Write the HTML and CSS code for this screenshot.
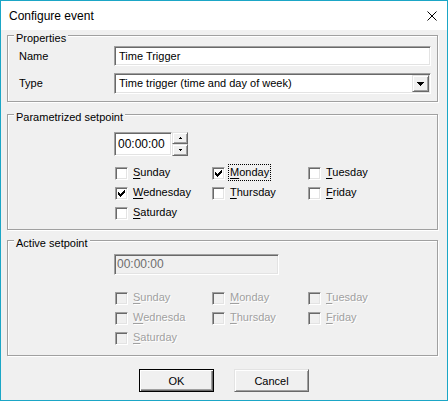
FILE: index.html
```html
<!DOCTYPE html>
<html>
<head>
<meta charset="utf-8">
<link rel="stylesheet" href="styles.css">
</head>
<body>
<div class="window">
  <div class="titlebar">
    <span class="title">Configure event</span>
    <span class="close"><svg width="10" height="10" viewBox="0 0 10 10"><path d="M0.5 0.5L9.5 9.5M9.5 0.5L0.5 9.5" stroke="#000" stroke-width="1" fill="none"/></svg></span>
  </div>
  <div class="client">
    <div class="group g-props">
      <div class="legend">Properties</div>
      <div class="form">
        <span class="flabel">Name</span>
        <div class="edit name-edit">Time Trigger</div>
        <span class="flabel">Type</span>
        <div class="combo">
          <span class="combo-text">Time trigger (time and day of week)</span>
          <span class="drop raised"><svg width="7" height="4" viewBox="0 0 7 4" shape-rendering="crispEdges"><path d="M0 0h7v1H0z M1 1h5v1H1z M2 2h3v1H2z M3 3h1v1H3z" fill="#000"/></svg></span>
        </div>
      </div>
    </div>

    <div class="group g-param">
      <div class="legend">Parametrized setpoint</div>
      <div class="time-row">
        <div class="edit time-edit">00:00:00</div>
        <div class="spin">
          <span class="spin-btn raised"><svg width="3" height="2" viewBox="0 0 3 2" shape-rendering="crispEdges"><path d="M1 0h1v1H1z M0 1h3v1H0z" fill="#000"/></svg></span>
          <span class="spin-btn raised"><svg width="3" height="2" viewBox="0 0 3 2" shape-rendering="crispEdges"><path d="M0 0h3v1H0z M1 1h1v1H1z" fill="#000"/></svg></span>
        </div>
      </div>
      <div class="days">
        <div class="day"><span class="cb"></span><span class="dlabel"><u>S</u>unday</span></div>
        <div class="day"><span class="cb"><svg class="check" width="7" height="7" viewBox="0 0 7 7" shape-rendering="crispEdges"><path d="M6 0h1v1H6z M5 1h2v1H5z M0 2h1v1H0z M4 2h3v1H4z M0 3h2v1H0z M3 3h3v1H3z M0 4h5v1H0z M1 5h3v1H1z M2 6h1v1H2z" fill="#000"/></svg></span><span class="dlabel focus"><u>M</u>onday</span></div>
        <div class="day"><span class="cb"></span><span class="dlabel"><u>T</u>uesday</span></div>
        <div class="day"><span class="cb"><svg class="check" width="7" height="7" viewBox="0 0 7 7" shape-rendering="crispEdges"><path d="M6 0h1v1H6z M5 1h2v1H5z M0 2h1v1H0z M4 2h3v1H4z M0 3h2v1H0z M3 3h3v1H3z M0 4h5v1H0z M1 5h3v1H1z M2 6h1v1H2z" fill="#000"/></svg></span><span class="dlabel"><u>W</u>ednesday</span></div>
        <div class="day"><span class="cb"></span><span class="dlabel"><u>T</u>hursday</span></div>
        <div class="day"><span class="cb"></span><span class="dlabel"><u>F</u>riday</span></div>
        <div class="day"><span class="cb"></span><span class="dlabel"><u>S</u>aturday</span></div>
      </div>
    </div>

    <div class="group g-active">
      <div class="legend">Active setpoint</div>
      <div class="edit active-edit">00:00:00</div>
      <div class="days disabled">
        <div class="day"><span class="cb"></span><span class="dlabel"><u>S</u>unday</span></div>
        <div class="day"><span class="cb"></span><span class="dlabel"><u>M</u>onday</span></div>
        <div class="day"><span class="cb"></span><span class="dlabel"><u>T</u>uesday</span></div>
        <div class="day"><span class="cb"></span><span class="dlabel"><u>W</u>ednesda</span></div>
        <div class="day"><span class="cb"></span><span class="dlabel"><u>T</u>hursday</span></div>
        <div class="day"><span class="cb"></span><span class="dlabel"><u>F</u>riday</span></div>
        <div class="day"><span class="cb"></span><span class="dlabel"><u>S</u>aturday</span></div>
      </div>
    </div>

    <div class="buttons">
      <button class="btn default">OK</button>
      <button class="btn raised">Cancel</button>
    </div>
  </div>
</div>
</body>
</html>
```

FILE: styles.css
```css
html, body {
  margin: 0;
  padding: 0;
  background: #f0f0f0;
}
body {
  font-family: "Liberation Sans", Arial, sans-serif;
  font-size: 11px;
  color: #000;
}
.window {
  width: 448px;
  height: 401px;
  box-sizing: border-box;
  border: 1px solid #1ba6c6;
  background: #f0f0f0;
  display: flex;
  flex-direction: column;
}
.titlebar {
  height: 29px;
  flex: none;
  background: #fff;
  display: flex;
  align-items: center;
  justify-content: space-between;
  padding-left: 8px;
}
.title {
  font-size: 12px;
  line-height: 16px;
  padding-top: 1px;
}
.close {
  width: 30px;
  height: 29px;
  display: flex;
  align-items: center;
  justify-content: center;
}
.client {
  padding: 5px 0 0 6px;
  display: flex;
  flex-direction: column;
}
.group {
  width: 431px;
  box-sizing: border-box;
  border: 1px solid #a0a0a0;
  box-shadow: inset 1px 1px 0 #fff, 1px 1px 0 #fff;
  flex: none;
}
.g-props { height: 67px; }
.g-param { height: 116px; margin-top: 12px; }
.g-active { height: 116px; margin-top: 10px; }
.legend {
  width: fit-content;
  height: 13px;
  line-height: 13px;
  margin: -4px 0 0 6px;
  padding: 0 2px;
  background: #f0f0f0;
}
.form {
  display: grid;
  grid-template-columns: 95px 317px;
  row-gap: 7px;
  padding-left: 11px;
  margin-top: 1px;
  align-items: center;
}
.flabel {
  line-height: 13px;
}
.edit {
  box-sizing: border-box;
  border: 1px solid;
  border-color: #a0a0a0 #fff #fff #a0a0a0;
  box-shadow: inset 1px 1px 0 #696969, inset -1px -1px 0 #e3e3e3;
  background: #fff;
  padding-left: 4px;
  white-space: nowrap;
}
.name-edit {
  height: 20px;
  line-height: 18px;
}
.combo {
  box-sizing: border-box;
  height: 21px;
  border: 1px solid;
  border-color: #a0a0a0 #fff #fff #a0a0a0;
  box-shadow: inset 1px 1px 0 #696969, inset -1px -1px 0 #e3e3e3;
  background: #fff;
  display: flex;
  align-items: center;
}
.combo-text {
  flex: 1;
  padding-left: 4px;
  line-height: 17px;
}
.raised {
  border: 1px solid;
  border-color: #e3e3e3 #696969 #696969 #e3e3e3;
  box-shadow: inset 1px 1px 0 #fff, inset -1px -1px 0 #a0a0a0;
  background: #f0f0f0;
}
.drop {
  box-sizing: border-box;
  width: 17px;
  height: 17px;
  margin-right: 1px;
  display: flex;
  align-items: center;
  justify-content: center;
}
.time-row {
  display: flex;
  margin: 8px 0 0 106px;
}
.time-edit {
  width: 58px;
  height: 24px;
  line-height: 22px;
  padding-left: 3px;
  font-size: 12px;
}
.spin {
  display: flex;
  flex-direction: column;
  width: 16px;
  height: 24px;
}
.spin-btn {
  box-sizing: border-box;
  height: 12px;
  display: flex;
  align-items: center;
  justify-content: center;
}
.days {
  display: grid;
  grid-template-columns: 97px 96px auto;
  grid-auto-rows: 20px;
  margin: 8px 0 0 107px;
}
.g-active .days {
  margin-top: 14px;
}
.day {
  display: flex;
  align-items: flex-start;
}
.cb {
  box-sizing: border-box;
  width: 13px;
  height: 13px;
  margin-top: 3px;
  border: 1px solid;
  border-color: #a0a0a0 #fff #fff #a0a0a0;
  box-shadow: inset 1px 1px 0 #696969, inset -1px -1px 0 #e3e3e3;
  background: #fff;
  display: flex;
  padding: 2px 0 0 2px;
  flex: none;
}
.check {
  display: block;
}
.dlabel {
  margin: 2px 0 0 5px;
  line-height: 13px;
  white-space: nowrap;
}
.dlabel u {
  text-underline-offset: 2px;
}
.focus {
  outline: 1px dotted #000;
  outline-offset: 1px;
}
.disabled .cb {
  background: #f0f0f0;
}
.disabled .dlabel {
  color: #a0a0a0;
  text-shadow: 1px 1px 0 #fff;
}
.active-edit {
  width: 165px;
  height: 21px;
  line-height: 19px;
  margin: 4px 0 0 106px;
  padding-left: 2px;
  background: #f0f0f0;
  color: #6d6d6d;
  font-size: 12px;
}
.buttons {
  display: flex;
  gap: 20px;
  margin-top: 13px;
  padding-left: 132px;
}
.btn {
  box-sizing: border-box;
  width: 75px;
  height: 23px;
  padding: 0;
  margin: 0;
  font-family: "Liberation Sans", Arial, sans-serif;
  font-size: 11px;
  color: #000;
  background: #f0f0f0;
}
.btn.default {
  border: 1px solid #000;
  box-shadow: inset 1px 1px 0 #fff, inset -1px -1px 0 #696969, inset -2px -2px 0 #a0a0a0;
}
```
